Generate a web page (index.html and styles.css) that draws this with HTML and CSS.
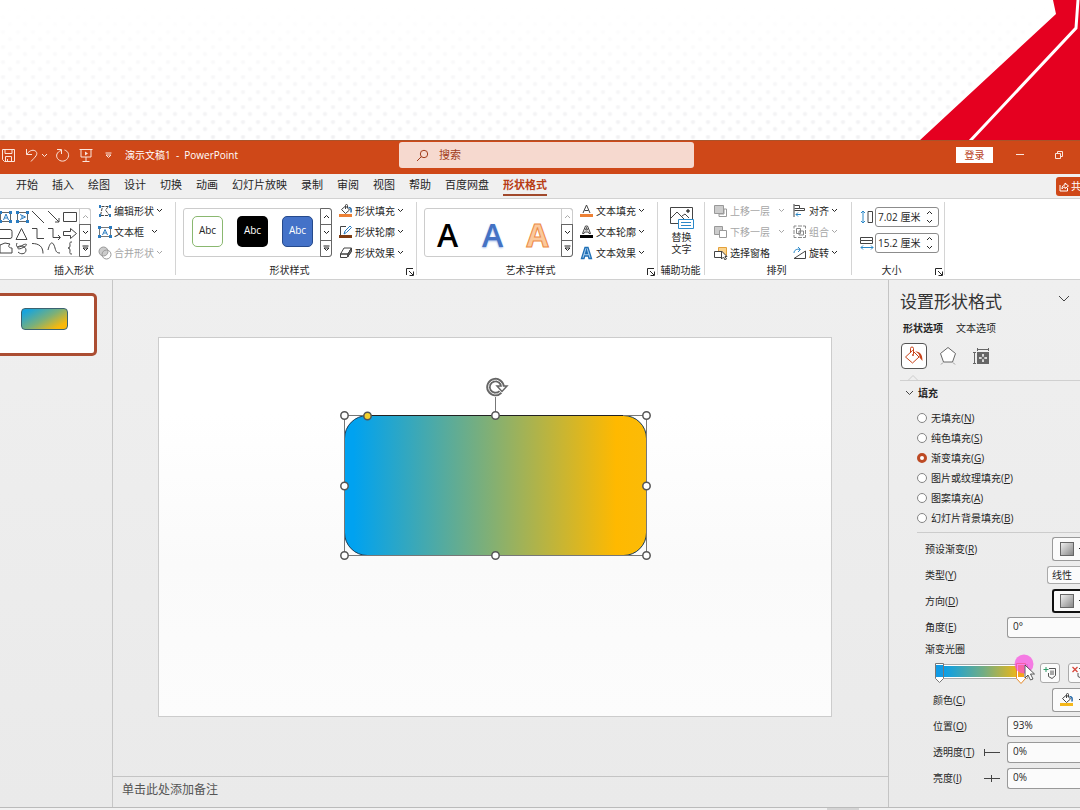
FILE: index.html
```html
<!DOCTYPE html>
<html lang="zh-CN">
<head>
<meta charset="utf-8">
<meta name="viewport" content="width=device-width, initial-scale=1">
<title>演示文稿1 - PowerPoint</title>
<link rel="stylesheet" href="styles.css">
</head>
<body>
<svg class="defs" aria-hidden="true">
  <symbol id="chev" viewBox="0 0 7 5"><path d="M1 1l2.500 2.500L6 1" fill="none" stroke="currentColor"/></symbol>
  <symbol id="up" viewBox="0 0 7 5"><path d="M1 4l2.500-2.500L6 4" fill="none" stroke="currentColor"/></symbol>
  <symbol id="more" viewBox="0 0 7 7"><path d="M.5 1h6M1 3l2.500 2.500L6 3z" fill="none" stroke="currentColor"/></symbol>
  <symbol id="launch" viewBox="0 0 8 8"><path d="M.5 7V.5H7M3 3l4 4M7.500 3.500v4h-4" fill="none" stroke="currentColor"/></symbol>
  <symbol id="bucket" viewBox="0 0 14 12"><path d="M2.500 5.500L6.500 2l4 4-4 3.500z" fill="#fff" stroke="#444"/><path d="M6.500 5V1.500a1 1 0 0 1 2 0V4" fill="none" stroke="#444"/><path d="M9.500 3.500c2.500 0 3 1.500 2.500 5" fill="none" stroke="#2468a8" stroke-width="1.500"/></symbol>
</svg>

<header class="banner">
  <svg class="ribbon-art" width="161" height="141" viewBox="0 0 161 141" aria-hidden="true">
    <path d="M134 0h27v141H0L137 14z" fill="#e50020"/>
    <path d="M159 0l-2 28L51 141" fill="none" stroke="#fff" stroke-width="3"/>
  </svg>
</header>

<div class="titlebar">
  <div class="quick">
    <button aria-label="保存"><svg width="15" height="15" viewBox="0 0 15 15"><path d="M1.500 1.500h12v12h-10l-2-2zM4 1.500v4h7v-4M4.500 13.500v-5h6v5M6.500 11v2.500" /></svg></button>
    <button aria-label="撤消"><svg width="14" height="15" viewBox="0 0 14 15"><path d="M1.500 1v5.500H7M1.500 6.500C5 1.500 9 1.500 11 3.500c2.500 3-1 5.500-5 10"/></svg></button>
    <button class="small" aria-label="撤消选项"><svg width="7" height="5"><use href="#chev"/></svg></button>
    <button aria-label="恢复"><svg width="15" height="15" viewBox="0 0 15 15"><path d="M2 1.500h4.500V6M6 2.500C2 4 .5 7.500 2.500 10.500c2.500 3.500 7.500 3.500 10 0C15 7 13 3 9.500 2"/></svg></button>
    <button class="show" aria-label="放映"><svg width="14" height="15" viewBox="0 0 14 15"><path d="M.5 1.500h13M2 1.500v7.500h10V1.500M7 9v4M3.500 13.500h7"/><path d="M6 3.500v4l3-2z" fill="currentColor" stroke="none"/></svg></button>
    <button class="custom" aria-label="自定义"><svg width="7" height="7"><use href="#more"/></svg></button>
    <span class="doc">演示文稿1&nbsp; -&nbsp; PowerPoint</span>
  </div>
  <label class="search">
    <svg width="13" height="13" viewBox="0 0 13 13"><circle cx="8" cy="5" r="3.700"/><path d="M5.400 7.600L1 12"/></svg>
    <input type="text" placeholder="搜索" aria-label="搜索">
  </label>
  <div class="window">
    <button class="login">登录</button>
    <button aria-label="最小化"><svg width="10" height="10"><path d="M1 4.500h8"/></svg></button>
    <button aria-label="还原"><svg width="10" height="10" viewBox="0 0 10 10"><path d="M1.500 3.500h5v5h-5zM3.500 3V1.500h5v5H7"/></svg></button>
  </div>
</div>

<nav class="tabs">
  <a href="#">开始</a><a href="#">插入</a><a href="#">绘图</a><a href="#">设计</a><a href="#">切换</a><a href="#">动画</a><a href="#">幻灯片放映</a><a href="#">录制</a><a href="#">审阅</a><a href="#">视图</a><a href="#">帮助</a><a href="#">百度网盘</a><a href="#" class="active">形状格式</a>
  <button class="share"><svg width="10" height="11" viewBox="0 0 10 11"><path d="M1 4v6h7.500V7M3 8c0-3 1-4 3-4V2l3.500 3L6 7.500V6C4.500 6 4 6.500 3 8z"/></svg><span>共</span></button>
</nav>

<section class="ribbon">
  <div class="group g-insert">
    <div class="body">
      <div class="gallery">
        <svg class="shapes" width="79" height="47" viewBox="0 0 79 47">
          <g stroke="#2b7cc0"><path d="M.5 3.500h10v9h-10zM17.500 3.500h10v9h-10z" stroke="#666"/><path d="M3.500 11L6 5l2.500 6M4.500 9h3M20 5.500l5.500 2.500-5.500 2.500M22 6.500v3" /></g>
          <g fill="#2b7cc0" stroke="none"><path d="M9 2h3v3H9zM9 11h3v3H9zM16 2h3v3h-3zM26 2h3v3h-3zM16 11h3v3h-3zM26 11h3v3h-3zM0 2h2v3H0zM0 11h2v3H0z"/></g>
          <path d="M32 2l12 12M48 2l11 11M59 9v4h-4M63.500 3.500h13v9h-13zM-2 20.500h12q2 0 2 2v5q0 2-2 2H-2M16 30.500l5.500-11 5.500 11zM32 19.500h5v10h7M48 19.500h5v9h7M58 26l2.500 2.500L58 31M63.500 22.500h7v-3l6 5-6 5v-3h-7zM0 36l5-2 5 1c-3 3 0 4 2 4v5H0zM17 34c-2 5 2 5 6 2 4-2 5 0 1 2-5 3-7 2-6 0s8-1 8 3-5 5-8 2M32 34.500c7 0 11 3 11 10M48 41c3-12 6-6 7-2s2 5 5 5M72 33c-3 0-2 1-2 4q0 2-2 2 2 0 2 2c0 3-1 4 2 4"/>
        </svg>
        <div class="scroll"><button disabled aria-label="上一行"><svg width="7" height="5"><use href="#up"/></svg></button><button aria-label="下一行"><svg width="7" height="5"><use href="#chev"/></svg></button><button aria-label="更多形状"><svg width="7" height="7"><use href="#more"/></svg></button></div>
      </div>
      <div class="cmds">
        <button><svg width="14" height="14" viewBox="0 0 14 14"><path d="M3.500 2.500h7L7.500 6l4 5.500h-9l2-9" stroke-dasharray="3 1"/><path d="M1 1h2v3H1zM11 1h2v3h-2zM1 10h2v3H1zM11 10h2v3h-2z" fill="#2b7cc0" stroke="none"/></svg><span>编辑形状</span><svg width="7" height="5"><use href="#chev"/></svg></button>
        <button><svg width="14" height="14" viewBox="0 0 14 14"><path d="M1.500 2.500h11v9h-11z" stroke="#777"/><path d="M4.500 10L7 4.500 9.500 10M5.500 8h3" stroke="#2b7cc0"/><path d="M0 1h3v3H0zM11 1h3v3h-3zM0 10h3v3H0zM11 10h3v3h-3z" fill="#2b7cc0" stroke="none"/></svg><span class="w3">文本框</span><svg width="7" height="5"><use href="#chev"/></svg></button>
        <button disabled><svg width="14" height="14" viewBox="0 0 14 14"><circle cx="5.500" cy="5.500" r="4.500" fill="#ccc" stroke="#999"/><circle cx="8.500" cy="8.500" r="4.500" stroke="#999"/></svg><span>合并形状</span><svg width="7" height="5"><use href="#chev"/></svg></button>
      </div>
    </div>
    <div class="label">插入形状</div>
  </div>

  <div class="group g-style">
    <div class="body">
      <div class="gallery">
        <div class="presets"><button class="p1">Abc</button><button class="p2">Abc</button><button class="p3">Abc</button></div>
        <div class="scroll"><button aria-label="上一行"><svg width="7" height="5"><use href="#up"/></svg></button><button aria-label="下一行"><svg width="7" height="5"><use href="#chev"/></svg></button><button aria-label="更多样式"><svg width="7" height="7"><use href="#more"/></svg></button></div>
      </div>
      <div class="cmds">
        <button><svg width="14" height="14" viewBox="0 0 14 14"><use href="#bucket" width="14" height="12"/><path d="M0 10h13v3H0z" fill="#ed8034" stroke="none"/></svg><span>形状填充</span><svg width="7" height="5"><use href="#chev"/></svg></button>
        <button><svg width="14" height="14" viewBox="0 0 14 14"><path d="M7 1.500H1.500V10"/><path d="M5 9l1-3 5-5 1.500 1.500-5 5z" stroke="#2b7cc0" fill="#fff"/><path d="M0 10h13v3H0z" fill="#7d3c13" stroke="none"/></svg><span>形状轮廓</span><svg width="7" height="5"><use href="#chev"/></svg></button>
        <button><svg width="14" height="14" viewBox="0 0 14 14"><path d="M5 2h7.500L9 8H1.500z" fill="#fff"/><path d="M1.500 8v3.500H8L12.500 5V2L9 8v3M1.500 8H9" /><path d="M9 8l3.500-6v3.500L8.500 11z" fill="#777"/></svg><span>形状效果</span><svg width="7" height="5"><use href="#chev"/></svg></button>
      </div>
    </div>
    <div class="label">形状样式</div>
    <button class="launch" aria-label="形状样式设置"><svg width="8" height="8"><use href="#launch"/></svg></button>
  </div>

  <div class="group g-art">
    <div class="body">
      <div class="gallery">
        <div class="presets wordart"><button class="a1">A</button><button class="a2">A</button><button class="a3">A</button></div>
        <div class="scroll"><button disabled aria-label="上一行"><svg width="7" height="5"><use href="#up"/></svg></button><button aria-label="下一行"><svg width="7" height="5"><use href="#chev"/></svg></button><button aria-label="更多艺术字"><svg width="7" height="7"><use href="#more"/></svg></button></div>
      </div>
      <div class="cmds">
        <button><svg width="14" height="14" viewBox="0 0 14 14"><path d="M3 9l3.500-8L10 9M4.500 6.500h4"/><path d="M0 10h13v3H0z" fill="#ed8034" stroke="none"/></svg><span>文本填充</span><svg width="7" height="5"><use href="#chev"/></svg></button>
        <button><svg width="14" height="14" viewBox="0 0 14 14"><path d="M2.500 8.500l3-7.500h2l3 7.500H9L8.500 7h-4L4 8.500zM5.500 5h2l-1-2.500z"/><path d="M0 10h13v3H0z" fill="#000" stroke="none"/></svg><span>文本轮廓</span><svg width="7" height="5"><use href="#chev"/></svg></button>
        <button><svg width="14" height="14" viewBox="0 0 14 14"><path d="M1.500 12.500L5 1.500h3l3.500 11H9L8.300 10H4.700L4 12.500zM5.500 7.500h2L6.500 4z" stroke="#1f6fb5" stroke-width="1.300" fill="#a9d0f1"/></svg><span>文本效果</span><svg width="7" height="5"><use href="#chev"/></svg></button>
      </div>
    </div>
    <div class="label">艺术字样式</div>
    <button class="launch" aria-label="艺术字样式设置"><svg width="8" height="8"><use href="#launch"/></svg></button>
  </div>

  <div class="group g-alt">
    <div class="body">
      <button class="alt"><svg width="24" height="24" viewBox="0 0 24 24"><path d="M8 17.500H.5V1.500h22V13M1 12l6-6 7 7M12 10l3-2 4 4" stroke="#444"/><circle cx="18" cy="5" r="1.300" fill="#444"/><path d="M8.500 13.500h15v9h-15z" fill="#fff" stroke="#2b88c8"/><path d="M11 16.500h10M11 19.500h10" stroke="#2b88c8"/></svg><span>替换<br>文字</span></button>
    </div>
    <div class="label">辅助功能</div>
  </div>

  <div class="group g-arrange">
    <div class="body">
      <div class="cmds wide">
        <button disabled><svg width="14" height="14" viewBox="0 0 14 14"><path d="M5 12.500h7.500V5H10v5H5z" stroke="#999"/><path d="M.5 1.500h9v8h-9z" fill="#ccc" stroke="#999"/></svg><span>上移一层</span><svg width="7" height="5"><use href="#chev"/></svg></button>
        <button disabled><svg width="14" height="14" viewBox="0 0 14 14"><path d="M.5 1.500h8v8h-8z" fill="#ccc" stroke="#999"/><path d="M5.500 5.500h7v7h-7z" fill="#fff" stroke="#999"/></svg><span>下移一层</span><svg width="7" height="5"><use href="#chev"/></svg></button>
        <button><svg width="14" height="14" viewBox="0 0 14 14"><path d="M4.500 1.500h8v8h-8z" fill="#fbd38b" stroke="#e3a13c"/><path d="M7 5.500H.5v6H7" fill="#fff"/><path d="M7.500 5v8l2-2 1.500 3 1.500-1-1.500-2.500h2z" fill="#fff"/></svg><span>选择窗格</span></button>
      </div>
      <div class="cmds">
        <button><svg width="14" height="14" viewBox="0 0 14 14"><path d="M1 0v13M1.500 1.500h5v3h-5M1.500 6.500h10v-2h-5"/><path d="M8 10.500H3M5 8.500l-2 2 2 2" stroke="#2b88c8"/></svg><span>对齐</span><svg width="7" height="5"><use href="#chev"/></svg></button>
        <button disabled><svg width="14" height="14" viewBox="0 0 14 14"><path d="M1 3.500V1h2.500M10 1h2.500v2.500M12.500 10v2.500H10M3.500 12.500H1V10M5 1h4M5 12.500h4M1 5v4M12.500 5v4M3.500 3.500h4v5h-4zM6 6h4.500v4H6z" stroke="#888"/></svg><span>组合</span><svg width="7" height="5"><use href="#chev"/></svg></button>
        <button><svg width="14" height="14" viewBox="0 0 14 14"><path d="M12.500 5v7.500H1z"/><path d="M1 7c0-3 3-4.500 6-3.500M5 1l2.500 2.500L5 6" stroke="#2b88c8"/></svg><span>旋转</span><svg width="7" height="5"><use href="#chev"/></svg></button>
      </div>
    </div>
    <div class="label">排列</div>
  </div>

  <div class="group g-size">
    <div class="body">
      <label><svg width="14" height="14" viewBox="0 0 14 14"><path d="M3 1v12M1 3l2-2 2 2M1 11l2 2 2-2" stroke="#2b88c8"/><path d="M8 1.500h4.500v11H8z"/></svg><span class="spin"><input type="text" value="7.02 厘米" aria-label="高度"><span><svg width="7" height="5"><use href="#up"/></svg><svg width="7" height="5"><use href="#chev"/></svg></span></span></label>
      <label><svg width="14" height="14" viewBox="0 0 14 14"><path d="M1 11.500h12M3 9.500l-2 2 2 2M11 9.500l2 2-2 2" stroke="#2b88c8"/><path d="M.5 1.500h12v3H.5zM.5 4.500v3h12v-3"/></svg><span class="spin"><input type="text" value="15.2 厘米" aria-label="宽度"><span><svg width="7" height="5"><use href="#up"/></svg><svg width="7" height="5"><use href="#chev"/></svg></span></span></label>
    </div>
    <div class="label">大小</div>
    <button class="launch" aria-label="大小设置"><svg width="8" height="8"><use href="#launch"/></svg></button>
  </div>
</section>

<main class="work">
  <aside class="thumbs"><button class="thumb" aria-label="幻灯片 1"><span></span></button></aside>
  <div class="editor">
    <div class="slide">
      <svg class="shape" width="320" height="186" viewBox="-8 -38 320 186" aria-label="圆角矩形">
        <defs><linearGradient id="fill"><stop offset="0.03" stop-color="#00a2f0"/><stop offset="0.5" stop-color="#86b070"/><stop offset="0.9" stop-color="#ffb900"/><stop offset="1" stop-color="#fbbb08"/></linearGradient></defs>
        <rect x=".5" y=".5" width="302" height="140" rx="23" fill="url(#fill)" stroke="#173a55"/>
        <path d="M.5.5h302v140H.5zM151.500-18V0" fill="none" stroke="#777"/>
        <path d="M24 .5h255" stroke="#222"/>
        <g fill="#fff" stroke="#555" stroke-width="1.500">
          <circle cx=".5" cy=".5" r="3.700"/><circle cx="151.500" cy=".5" r="3.700"/><circle cx="302.500" cy=".5" r="3.700"/>
          <circle cx=".5" cy="71" r="3.700"/><circle cx="302.500" cy="71" r="3.700"/>
          <circle cx=".5" cy="140.500" r="3.700"/><circle cx="151.500" cy="140.500" r="3.700"/><circle cx="302.500" cy="140.500" r="3.700"/>
          <circle cx="23.500" cy="1" r="3.700" fill="#f5d22d"/>
        </g>
        <path d="M156.500-23a7 7 0 1 1 2-5" fill="none" stroke="#666" stroke-width="4.500"/>
        <path d="M153-29h10l-5 5.500z" fill="#fff" stroke="#666" stroke-width="1.500"/>
        <path d="M156.500-23a7 7 0 1 1 2-5" fill="none" stroke="#eee" stroke-width="1"/>
      </svg>
    </div>
    <div class="notes">单击此处添加备注</div>
  </div>

  <aside class="pane">
    <div class="pane-head"><h2>设置形状格式</h2><button aria-label="任务窗格选项"><svg width="12" height="8" viewBox="0 0 12 8"><path d="M1 1l5 5 5-5"/></svg></button></div>
    <div class="pane-tabs"><button class="on">形状选项</button><button>文本选项</button></div>
    <div class="pane-icons">
      <button class="on" aria-label="填充与线条"><svg width="22" height="22" viewBox="0 0 22 22"><path d="M2.500 12L9.500 5.500l6.500 6.500-6.500 6z" fill="#fff" stroke="#c8441b"/><path d="M7.500 8V3.500a1.500 1.500 0 0 1 3 0V9" stroke="#c8441b"/><path d="M12 6.500c4.500 0 7.500 2 7.500 9.500l-3-3.500c0-3-1-4.500-4.500-6z" fill="#c8441b" stroke="none"/><circle cx="10" cy="10" r="1" fill="#c8441b" stroke="none"/></svg></button>
      <button aria-label="效果"><svg width="18" height="20" viewBox="0 0 18 20"><path d="M9 1.500l7.500 6-3 8.500h-9l-3-8.500z" fill="#fff" stroke="#666"/><path d="M4 16.500l-2 2M14 16.500l2 2" stroke="#999"/></svg></button>
      <button aria-label="大小与属性"><svg width="18" height="18" viewBox="0 0 18 18"><path d="M5 5h12v12H5z" fill="#666" stroke="none"/><path d="M5 2.500h12M5.500 1v3M16.500 1v3M2.500 5v12M1 5.500h3M1 16.500h3" stroke="#666"/><path d="M11 7v3M11 12v3M7 11h3M12 11h3M10 8h2M10 14h2M8 10v2M14 10v2" stroke="#fff"/></svg></button>
    </div>
    <svg class="notch" width="24" height="7" viewBox="0 0 24 7" aria-hidden="true"><path d="M7 6.500l5-5 5 5"/></svg>
    <fieldset>
      <legend><svg width="9" height="6" viewBox="0 0 9 6"><path d="M1 1l3.500 3.500L8 1"/></svg>填充</legend>
      <label><input type="radio" name="fill">无填充(<u>N</u>)</label>
      <label><input type="radio" name="fill">纯色填充(<u>S</u>)</label>
      <label><input type="radio" name="fill" checked>渐变填充(<u>G</u>)</label>
      <label><input type="radio" name="fill">图片或纹理填充(<u>P</u>)</label>
      <label><input type="radio" name="fill">图案填充(<u>A</u>)</label>
      <label><input type="radio" name="fill">幻灯片背景填充(<u>B</u>)</label>
    </fieldset>
    <div class="props">
      <div class="row"><label for="preset">预设渐变(<u>R</u>)</label><button id="preset" class="pick"><i></i><svg width="7" height="5"><use href="#chev"/></svg></button></div>
      <div class="row"><label for="type">类型(<u>Y</u>)</label><select id="type"><option>线性</option></select></div>
      <div class="row"><label for="dir">方向(<u>D</u>)</label><button id="dir" class="pick focus"><i></i><svg width="7" height="5"><use href="#chev"/></svg></button></div>
      <div class="row"><label for="angle">角度(<u>E</u>)</label><input id="angle" type="text" value="0°"></div>
      <div class="row short"><span>渐变光圈</span></div>
      <div class="row stops">
        <svg class="track" width="102" height="28" viewBox="0 0 102 28" aria-label="渐变光圈">
          <defs><linearGradient id="bar"><stop offset="0.05" stop-color="#0c9fe6"/><stop offset="0.5" stop-color="#72ad84"/><stop offset="0.92" stop-color="#f5b70f"/></linearGradient></defs>
          <path d="M5.500 5.500h88v14h-88z" fill="#fff" stroke="#aaa"/><path d="M6 7h87v11H6z" fill="url(#bar)"/>
          <path d="M1.500 4.500h8v15l-4 4-4-4z" fill="#fff" stroke="#777"/><path d="M2 6h7v12H2z" fill="#119be5"/>
          <path d="M82.500 4.500h9v15l-4.500 5-4.500-5z" fill="#fff" stroke="#e58a2a"/><path d="M84 6h6v12h-6z" fill="#f4a51c"/>
          <circle cx="90" cy="5" r="9.500" fill="#f94be0" opacity=".7"/>
          <path d="M91 6v13l3-3 2.500 5 2.500-1-2.500-5h4z" fill="#fff" stroke="#333" stroke-width=".8"/>
        </svg>
        <button class="tool" aria-label="添加渐变光圈"><svg width="14" height="14" viewBox="0 0 14 14"><path d="M6 2.500h6.500v7l-3.500 3-3.500-2V7M8 4.500v4.500M10 4.500v4.500" stroke="#555"/><path d="M3 1v5M.5 3.500h5" stroke="#2c9b67"/></svg></button>
        <button class="tool" aria-label="删除渐变光圈"><svg width="14" height="14" viewBox="0 0 14 14"><path d="M7 2.500h6v7l-3 3-4-2V7M8.500 4.500v4.500M11 4.500v4.500" stroke="#555"/><path d="M.5 1l5 5M5.500 1l-5 5" stroke="#d6483c" stroke-width="1.300"/></svg></button>
      </div>
      <div class="row sub"><label for="color">颜色(<u>C</u>)</label><button id="color" class="pick"><svg width="14" height="14" viewBox="0 0 14 14"><use href="#bucket" width="14" height="12"/><path d="M0 10h13v3H0z" fill="#f4b71b" stroke="none"/></svg><svg width="7" height="5"><use href="#chev"/></svg></button></div>
      <div class="row sub"><label for="pos">位置(<u>O</u>)</label><input id="pos" type="text" value="93%"></div>
      <div class="row sub"><label for="alpha">透明度(<u>T</u>)</label><svg width="18" height="9" viewBox="0 0 18 9"><path d="M1.500 1v7M2 4.500h15"/></svg><input id="alpha" type="text" value="0%"></div>
      <div class="row sub"><label for="bright">亮度(<u>I</u>)</label><svg width="18" height="9" viewBox="0 0 18 9"><path d="M8.500 1v7M1 4.500h16"/></svg><input id="bright" type="text" value="0%"></div>
    </div>
  </aside>
</main>
<footer class="status"><span></span></footer>
</body>
</html>
```
FILE: styles.css
```css
* { box-sizing: border-box; }
body {
  margin: 0;
  min-height: 100vh;
  display: flex;
  flex-direction: column;
  overflow: hidden;
  background: #ededed;
  color: #262626;
  font: 10px/14px "Open Sans", "Noto Sans CJK SC", sans-serif;
}
button, input, select { font: inherit; color: inherit; margin: 0; padding: 0; border: 0; background: none; }
svg { flex: none; fill: none; stroke: #444; }
use { stroke: none; }
.defs { position: absolute; width: 0; height: 0; }

.banner {
  height: 140px;
  display: flex;
  justify-content: flex-end;
  background:
    linear-gradient(#fff 5%, rgba(255,255,255,0)),
    radial-gradient(circle at 10px 9px, #f1f1f3 1px, transparent 3px) 0 0 / 15px 15px,
    radial-gradient(circle at 3px 2px, #f1f1f3 1px, transparent 3px) 0 0 / 15px 15px,
    #fff;
}
.ribbon-art path:first-child { stroke: none; }

.titlebar {
  height: 34px;
  display: flex;
  align-items: flex-start;
  background: #cf4818;
  border-top: 1px solid #a9532b;
  color: #fbe6dd;
}
.titlebar svg { stroke: currentColor; display: block; }
.quick { width: 399px; height: 28px; display: flex; align-items: center; padding-left: 1px; }
.quick button { margin-right: 9px; }
.quick .small { margin: 0 7px 0 -7px; }
.quick .show { margin: 0 12px 0 0; }
.quick .custom { margin: 0 13px 0 0; }
.doc { white-space: nowrap; color: #fff; }
.search {
  width: 295px;
  height: 26px;
  margin-top: 1px;
  padding-left: 17px;
  display: flex;
  align-items: center;
  gap: 10px;
  border-radius: 3px;
  background: #f6d9cf;
  color: #a23d1c;
}
.search input { width: 200px; font-size: 11px; outline: 0; }
.search input::placeholder { color: #a23d1c; opacity: 1; }
.window { margin-left: auto; height: 28px; display: flex; align-items: center; gap: 22px; padding-right: 16px; }
.window .login { width: 37px; height: 16px; background: #fff; color: #b8401a; }
.window button:nth-child(2) { margin-right: 7px; }

.tabs {
  height: 25px;
  display: flex;
  align-items: center;
  gap: 14px;
  padding-left: 16px;
  border-bottom: 1px solid #d2d2d2;
  background: #f0f0f0;
}
.tabs a { color: #262626; text-decoration: none; font-size: 11px; white-space: nowrap; line-height: 18px; border-bottom: 2px solid transparent; }
.tabs .active { color: #b83c14; font-weight: 700; border-color: #a1492c; }
.share {
  margin-left: auto;
  width: 24px;
  height: 19px;
  padding-left: 3px;
  display: flex;
  align-items: center;
  gap: 2px;
  overflow: hidden;
  border-radius: 3px 0 0 3px;
  background: #cf4818;
  color: #fff;
}
.share svg { stroke: #fff; }

.ribbon { height: 81px; display: flex; background: #fff; border-bottom: 1px solid #d0d0d0; }
.group { position: relative; display: flex; flex-direction: column; padding-top: 1px; }
.group::after { content: ""; position: absolute; right: 0; top: 3px; bottom: 4px; width: 1px; background: #d4d4d4; }
.body { height: 63px; display: flex; align-items: flex-start; }
.label { text-align: center; white-space: nowrap; }
.launch { position: absolute; right: 7px; bottom: 3px; display: flex; }
.g-insert { width: 176px; }
.g-insert .label { padding-right: 28px; }
.g-style, .g-art { width: 241px; padding-left: 7px; }
.g-style .label, .g-art .label { padding-right: 21px; }
.g-style .launch, .g-art .launch { right: 3px; }
.g-alt { width: 47px; }
.g-alt .label { margin-left: -2px; }
.g-arrange { width: 147px; padding-left: 9px; }
.g-arrange .label { padding-right: 13px; }
.g-size { width: 93px; padding-left: 8px; }
.g-size .label { padding-right: 22px; }
.g-size .launch { right: 2px; }

.gallery { display: flex; width: 149px; height: 49px; margin-top: 8px; border: 1px solid #ccc; border-radius: 3px; }
.g-insert .gallery { width: 91px; border-left: 0; border-radius: 0 3px 3px 0; }
.scroll { width: 12px; margin: -1px -1px -1px auto; display: flex; flex-direction: column; }
.scroll button { flex: 1; display: grid; place-items: center; border: 1px solid #666; color: #222; }
.scroll button + button { margin-top: -1px; }
.scroll button:first-child { border-radius: 0 3px 0 0; }
.scroll button:last-child { border-radius: 0 0 3px 0; }
.scroll button:disabled { border-color: #ccc; color: #aaa; }
.presets { flex: 1; display: flex; align-items: flex-start; gap: 14px; padding: 7px 0 0 8px; }
.presets button { width: 31px; height: 31px; padding-bottom: 4px; border-radius: 5px; }
.presets .p1 { border: 1px solid #8ab870; }
.presets .p2 { background: #000; color: #fff; }
.presets .p3 { background: #4472c8; border: 1px solid #264a8c; color: #fff; }
.presets.wordart { padding: 10px 0 0 7px; }
.wordart button { padding: 0; font-size: 32px; line-height: 31px; font-weight: 600; }
.wordart .a1 { color: #000; }
.wordart .a2 { color: #4472c4; text-shadow: 0 1px 2px #9db8e8; }
.wordart .a3 { color: #fbc99c; -webkit-text-stroke: 1px #ed8a45; font-weight: 700; }

.cmds { display: flex; flex-direction: column; margin-left: 7px; }
.cmds button { height: 21px; display: flex; align-items: center; gap: 2px; white-space: nowrap; }
.cmds button:disabled { color: #a6a6a6; }
.g-arrange .cmds { margin-left: 0; }
.g-arrange .wide { width: 79px; }
.g-arrange .wide button svg:last-child { margin-left: 6px; }
.cmds .w3 { margin-right: 5px; }
.alt { margin: 6px auto 0; display: flex; flex-direction: column; align-items: center; gap: 1px; line-height: 12px; }
.g-size .body { flex-direction: column; gap: 6px; padding-top: 7px; }
.g-size label { display: flex; align-items: center; gap: 1px; }
.spin { display: flex; width: 64px; height: 20px; padding: 0 5px 0 2px; border: 1px solid #8c8c8c; border-radius: 3px; }
.spin input { flex: 1; width: 46px; min-width: 0; }
.spin > span { display: flex; flex-direction: column; justify-content: space-around; }

.work { flex: 1; min-height: 0; display: flex; background: linear-gradient(#efefef, #eaeaea); }
.thumbs { width: 113px; padding-top: 13px; border-right: 1px solid #c6c6c6; }
.thumb { width: 97px; height: 63px; padding-bottom: 12px; display: block; background: #fff; border: 3px solid #ab4d32; border-left: 0; border-radius: 0 5px 5px 0; }
.thumb span { display: block; width: 47px; height: 22px; margin-left: 21px; border: 1px solid #3b6270; border-radius: 4px; background: linear-gradient(150deg, #18a4dc 10%, #7bb079 50%, #f9b90b 85%); }
.editor { flex: 1; min-width: 0; display: flex; flex-direction: column; }
.slide { position: relative; flex: 1; margin: 57px 56px 59px 45px; background: linear-gradient(#fff 20%, #fafafa 60%, #fcfcfc); border: 1px solid #ccc; }
.shape { position: absolute; left: 177px; top: 39px; }
.notes { height: 31px; padding: 5px 9px; border-top: 1px solid #c4c4c4; font-size: 12px; line-height: 16px; color: #555; }
.status { height: 3px; border-top: 1px solid #bbb; background: #f2f2f2; display: flex; }
.status span { width: 32px; margin-left: auto; margin-right: 221px; background: #d4d4d4; }

.pane { width: 192px; overflow: hidden; border-left: 1px solid #c4c4c4; white-space: nowrap; }
.pane-head { height: 40px; padding: 3px 10px 0 11px; display: flex; align-items: center; justify-content: space-between; }
.pane-head button { margin-top: -6px; }
.pane-head svg { display: block; }
.pane h2 { margin: 0; font-size: 17px; line-height: 24px; font-weight: 400; color: #333; }
.pane-tabs { height: 15px; display: flex; align-items: center; padding-left: 14px; }
.pane-tabs .on { font-weight: 700; margin-right: 13px; }
.pane-icons { height: 41px; display: flex; align-items: center; padding-left: 12px; gap: 12px; }
.pane-icons button { display: grid; place-items: center; }
.pane-icons button:last-child { margin-left: 3px; }
.pane-icons .on { width: 26px; height: 26px; border: 1px solid #555; border-radius: 4px; background: #fff; }
.notch { display: block; margin: -2px 0 0 12px; stroke: #ccc; }
.pane fieldset { margin: -1px 0 0 11px; padding: 0; border: 0; border-top: 1px solid #d0d0d0; min-width: 0; }
.pane legend { float: left; width: 100%; height: 27px; padding: 0 0 3px 5px; display: flex; align-items: center; gap: 4px; font-weight: 700; }
.pane fieldset label { display: flex; clear: both; align-items: center; height: 20px; padding-left: 17px; }
input[type=radio] { appearance: none; width: 10px; height: 10px; margin-right: 4px; border: 1px solid #858585; border-radius: 50%; background: #fff; }
input[type=radio]:checked { border: 3px solid #bd4a24; }
.props { margin: 4px 0 0 28px; padding: 3px 0 0 8px; border-top: 1px solid #ccc; }
.row { height: 26px; display: flex; align-items: center; }
.row.sub { padding-left: 8px; }
.row label { margin-right: auto; }
.row input { width: 73px; height: 21px; padding: 0 5px 2px; border: 1px solid #999; border-right: 0; border-radius: 3px 0 0 3px; background: #fbfbfb; }
.row > svg:not(.track) { margin-right: 6px; }
.row select { appearance: none; width: 33px; height: 18px; padding-left: 4px; border: 1px solid #aaa; border-right: 0; border-radius: 3px 0 0 3px; background: #fbfbfb; }
.pick { width: 28px; height: 24px; overflow: hidden; display: flex; align-items: center; gap: 4px; padding-left: 7px; border: 1px solid #999; border-right: 0; border-radius: 3px 0 0 3px; background: #fbfbfb; }
.pick i { flex: none; width: 14px; height: 14px; border: 1px solid #666; background: linear-gradient(135deg, #eee, #888); }
.pick.focus { border: 2px solid #111; border-right: 0; padding-left: 6px; }
.row.short { height: 18px; }
.row.stops { height: 29px; padding-left: 9px; }
.track { overflow: visible; position: relative; z-index: 1; stroke: none; }
.tool { flex: none; width: 20px; height: 20px; margin-left: 4px; display: grid; place-items: center; border: 1px solid #aaa; border-radius: 3px; background: #fbfbfb; }
.tool + .tool { width: 22px; margin-left: 8px; }
```
